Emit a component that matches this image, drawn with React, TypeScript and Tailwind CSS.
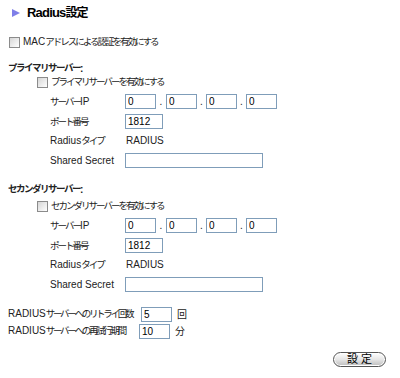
import React from 'react';

const font = "font-['Liberation_Sans','Noto_Sans_CJK_JP',sans-serif]";

// narrow the full-width runs, leave latin runs alone
const T: React.FC<{ s: string; jp?: string }> = ({ s, jp = 'text-[9.5px] tracking-[-2px]' }) => {
  const parts = s.match(/[\x00-\x7f]+|[^\x00-\x7f]+/g) ?? [];
  return (
    <>
      {parts.map((p, i) =>
        /[^\x00-\x7f]/.test(p) ? (
          <span key={i} className={jp}>{p}</span>
        ) : (
          <span key={i}>{p}</span>
        )
      )}
    </>
  );
};

const Check: React.FC<{ label: string }> = ({ label }) => (
  <label className="flex items-center h-[14px] whitespace-nowrap">
    <span className="w-[11px] h-[11px] border border-[#8b8b8b] bg-gradient-to-br from-[#d6d6d6] to-[#ffffff] mr-[3px]" />
    <span><T s={label} /></span>
  </label>
);

const Field: React.FC<{ value?: string; w: string }> = ({ value = '', w }) => (
  <input
    readOnly
    value={value}
    className={`${w} h-[15px] border border-[#7f9db9] px-[2px] text-[10px] leading-[13px] outline-none bg-white text-black`}
  />
);

const Row: React.FC<{ label: string; children: React.ReactNode }> = ({ label, children }) => (
  <div className="flex items-center h-[19.5px]">
    <div className="w-[75px] shrink-0 whitespace-nowrap"><T s={label} /></div>
    <div className="flex items-center">{children}</div>
  </div>
);

const ServerBlock: React.FC<{ title: string; check: string; gap: string }> = ({ title, check, gap }) => (
  <div>
    <div className="pl-[8px] font-bold h-[14px] flex items-center whitespace-nowrap">
      <T s={title} jp="text-[9.5px] tracking-[-1.5px]" />
    </div>
    <div className={`pl-[37px] ${gap}`}>
      <Check label={check} />
    </div>
    <div className="pl-[50px] mt-[3px]">
      <Row label="サーバーIP">
        <Field value="0" w="w-[31px]" />
        <span className="w-[10px] text-center">.</span>
        <Field value="0" w="w-[31px]" />
        <span className="w-[9px] text-center">.</span>
        <Field value="0" w="w-[31px]" />
        <span className="w-[9px] text-center">.</span>
        <Field value="0" w="w-[31px]" />
      </Row>
      <Row label="ポート番号">
        <Field value="1812" w="w-[38px]" />
      </Row>
      <Row label="Radiusタイプ">
        <span className="pl-[1px]">RADIUS</span>
      </Row>
      <Row label="Shared Secret">
        <Field w="w-[138px]" />
      </Row>
    </div>
  </div>
);

export default function App() {
  return (
    <div className={`${font} w-[400px] h-[378px] bg-white text-[10px] text-[#222] overflow-hidden`}>
      <div className="flex items-center pl-[12px] pt-[3px] h-[23px]">
        <span className="w-0 h-0 border-y-[4.5px] border-y-transparent border-l-[8px] border-l-[#7f7fe8] mr-[7px]" />
        <span className="font-bold text-black whitespace-nowrap">
          <span className="text-[13px] tracking-[-0.8px]">Radius</span>
          <span className="text-[12px] tracking-[-1px]">設定</span>
        </span>
      </div>
      <div className="pl-[9px] mt-[12px]">
        <Check label="MACアドレスによる認証を有効にする" />
      </div>
      <div className="mt-[12px]">
        <ServerBlock title="プライマリサーバー:" check="プライマリサーバーを有効にする" gap="mt-0" />
      </div>
      <div className="mt-[12px]">
        <ServerBlock title="セカンダリサーバー:" check="セカンダリサーバーを有効にする" gap="mt-[3px]" />
      </div>
      <div className="pl-[8px] mt-[12px] space-y-[1px]">
        <div className="flex items-center h-[16px] whitespace-nowrap">
          <span className="w-[133px]"><T s="RADIUSサーバーへのリトライ回数" jp="text-[9.5px] tracking-[-2.3px]" /></span>
          <Field value="5" w="w-[31px]" />
          <span className="ml-[5px]">回</span>
        </div>
        <div className="flex items-center h-[16px] whitespace-nowrap">
          <span className="w-[131px]"><T s="RADIUSサーバーへの再試行期間" jp="text-[9.5px] tracking-[-2.3px]" /></span>
          <Field value="10" w="w-[31px]" />
          <span className="ml-[5px]">分</span>
        </div>
      </div>
      <div className="flex justify-end pr-[14px] mt-[13px]">
        <button className="w-[53px] h-[15px] rounded-full border border-[#555] bg-gradient-to-b from-[#ffffff] via-[#e6e6e6] to-[#bdbdbd] text-[11px] leading-[13px] text-black shadow-[inset_0_0_0_1px_#ffffff] whitespace-nowrap">
          設&nbsp;定
        </button>
      </div>
    </div>
  );
}
